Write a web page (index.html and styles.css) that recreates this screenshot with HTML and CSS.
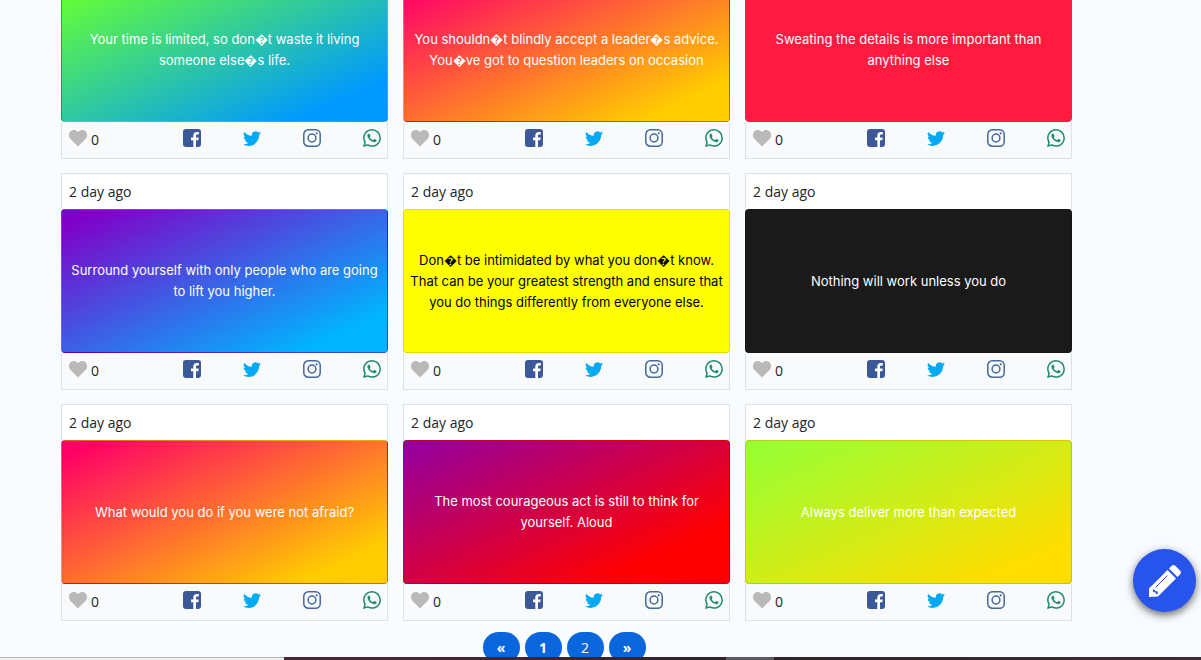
FILE: index.html
```
<!DOCTYPE html>
<html lang="en">
<head>
    <meta charset="UTF-8">
    <meta name="viewport" content="width=device-width, initial-scale=1.0">
    <title>Quotes</title>
    <link rel="stylesheet" href="styles.css">
</head>
<body>
    <svg class="sprite" aria-hidden="true">
        <symbol id="heart" viewBox="0 0 18 17">
            <path d="M9 17 1.500 9.500C-.5 7.500-.5 4 1.300 2 3.200 0 6.400 0 8.300 2L9 2.800 9.700 2c1.900-2 5.100-2 7 0 1.800 2 1.800 5.500-.2 7.500z"/>
        </symbol>
        <symbol id="facebook" viewBox="0 0 18 18">
            <rect width="18" height="18" rx="3"/>
            <path fill="#fff" d="M10.300 18v-6.700H8V8.600h2.300V6.500c0-2.300 1.400-3.600 3.500-3.600.8 0 1.500.1 2 .2v2.300h-1.400c-1.100 0-1.400.6-1.400 1.400v1.800h2.700l-.4 2.700H13V18z"/>
        </symbol>
        <symbol id="twitter" viewBox="0 0 16 16">
            <path d="M5.026 15c6.038 0 9.341-5.003 9.341-9.334 0-.14 0-.282-.006-.422A6.685 6.685 0 0 0 16 3.542a6.658 6.658 0 0 1-1.889.518 3.301 3.301 0 0 0 1.447-1.817 6.533 6.533 0 0 1-2.087.793A3.286 3.286 0 0 0 7.875 6.030a9.325 9.325 0 0 1-6.767-3.429 3.289 3.289 0 0 0 1.018 4.382A3.323 3.323 0 0 1 .64 6.575v.045a3.288 3.288 0 0 0 2.632 3.218 3.203 3.203 0 0 1-.865.115 3.230 3.230 0 0 1-.614-.057 3.283 3.283 0 0 0 3.067 2.277A6.588 6.588 0 0 1 .78 13.580a6.320 6.320 0 0 1-.78-.045A9.344 9.344 0 0 0 5.026 15z"/>
        </symbol>
        <symbol id="instagram" viewBox="0 0 18 18">
            <rect x="0.800" y="0.800" width="16.400" height="16.400" rx="4.500" fill="none" stroke="currentColor" stroke-width="1.500"/>
            <circle cx="9" cy="9" r="3.900" fill="none" stroke="currentColor" stroke-width="1.500"/>
            <circle cx="13.700" cy="4.300" r="1.100"/>
        </symbol>
        <symbol id="whatsapp" viewBox="0 0 16 16">
            <path d="M13.601 2.326A7.854 7.854 0 0 0 7.994 0C3.627 0 .068 3.558.064 7.926c0 1.399.366 2.760 1.057 3.965L0 16l4.204-1.102a7.933 7.933 0 0 0 3.790.965h.004c4.368 0 7.926-3.558 7.930-7.930A7.898 7.898 0 0 0 13.600 2.326zM7.994 14.521a6.573 6.573 0 0 1-3.356-.920l-.240-.144-2.494.654.666-2.433-.156-.251a6.560 6.560 0 0 1-1.007-3.505c0-3.626 2.957-6.584 6.591-6.584a6.560 6.560 0 0 1 4.660 1.931 6.557 6.557 0 0 1 1.928 4.660c-.004 3.639-2.961 6.592-6.592 6.592zm3.615-4.934c-.197-.099-1.170-.578-1.353-.646-.182-.065-.315-.099-.445.099-.133.197-.513.646-.627.775-.114.133-.232.148-.430.050-.197-.100-.836-.308-1.592-.985-.590-.525-.985-1.175-1.103-1.372-.114-.198-.011-.304.088-.403.087-.088.197-.232.296-.346.100-.114.133-.198.198-.330.065-.134.034-.248-.015-.347-.050-.099-.445-1.076-.612-1.470-.160-.389-.323-.335-.445-.340-.114-.007-.247-.007-.380-.007a.729.729 0 0 0-.529.247c-.182.198-.691.677-.691 1.654 0 .977.710 1.916.810 2.049.098.133 1.394 2.132 3.383 2.992.470.205.840.326 1.129.418.475.152.904.129 1.246.080.380-.058 1.171-.480 1.338-.943.164-.464.164-.860.114-1.057-.049-.084-.182-.133-.380-.232z"/>
        </symbol>
    </svg>

    <main class="container">
        <div class="quotes">
            <article class="quote">
                <div class="quote-text green-blue"><p>Your time is limited, so don&#xFFFD;t waste it living<br>someone else&#xFFFD;s life.</p></div>
                <div class="quote-footer">
                    <button class="like" type="button" aria-label="Like"><svg><use href="#heart"/></svg></button><span class="count">0</span>
                    <div class="share">
                        <a class="facebook" href="#" aria-label="Facebook"><svg><use href="#facebook"/></svg></a>
                        <a class="twitter" href="#" aria-label="Twitter"><svg><use href="#twitter"/></svg></a>
                        <a class="instagram" href="#" aria-label="Instagram"><svg><use href="#instagram"/></svg></a>
                        <a class="whatsapp" href="#" aria-label="WhatsApp"><svg><use href="#whatsapp"/></svg></a>
                    </div>
                </div>
            </article>
            <article class="quote">
                <div class="quote-text pink-orange"><p>You shouldn&#xFFFD;t blindly accept a leader&#xFFFD;s advice.<br>You&#xFFFD;ve got to question leaders on occasion</p></div>
                <div class="quote-footer">
                    <button class="like" type="button" aria-label="Like"><svg><use href="#heart"/></svg></button><span class="count">0</span>
                    <div class="share">
                        <a class="facebook" href="#" aria-label="Facebook"><svg><use href="#facebook"/></svg></a>
                        <a class="twitter" href="#" aria-label="Twitter"><svg><use href="#twitter"/></svg></a>
                        <a class="instagram" href="#" aria-label="Instagram"><svg><use href="#instagram"/></svg></a>
                        <a class="whatsapp" href="#" aria-label="WhatsApp"><svg><use href="#whatsapp"/></svg></a>
                    </div>
                </div>
            </article>
            <article class="quote">
                <div class="quote-text red"><p>Sweating the details is more important than<br>anything else</p></div>
                <div class="quote-footer">
                    <button class="like" type="button" aria-label="Like"><svg><use href="#heart"/></svg></button><span class="count">0</span>
                    <div class="share">
                        <a class="facebook" href="#" aria-label="Facebook"><svg><use href="#facebook"/></svg></a>
                        <a class="twitter" href="#" aria-label="Twitter"><svg><use href="#twitter"/></svg></a>
                        <a class="instagram" href="#" aria-label="Instagram"><svg><use href="#instagram"/></svg></a>
                        <a class="whatsapp" href="#" aria-label="WhatsApp"><svg><use href="#whatsapp"/></svg></a>
                    </div>
                </div>
            </article>
            <article class="quote">
                <div class="quote-date">2 day ago</div>
                <div class="quote-text purple-blue"><p>Surround yourself with only people who are going<br>to lift you higher.</p></div>
                <div class="quote-footer">
                    <button class="like" type="button" aria-label="Like"><svg><use href="#heart"/></svg></button><span class="count">0</span>
                    <div class="share">
                        <a class="facebook" href="#" aria-label="Facebook"><svg><use href="#facebook"/></svg></a>
                        <a class="twitter" href="#" aria-label="Twitter"><svg><use href="#twitter"/></svg></a>
                        <a class="instagram" href="#" aria-label="Instagram"><svg><use href="#instagram"/></svg></a>
                        <a class="whatsapp" href="#" aria-label="WhatsApp"><svg><use href="#whatsapp"/></svg></a>
                    </div>
                </div>
            </article>
            <article class="quote">
                <div class="quote-date">2 day ago</div>
                <div class="quote-text yellow"><p>Don&#xFFFD;t be intimidated by what you don&#xFFFD;t know.<br>That can be your greatest strength and ensure that<br>you do things differently from everyone else.</p></div>
                <div class="quote-footer">
                    <button class="like" type="button" aria-label="Like"><svg><use href="#heart"/></svg></button><span class="count">0</span>
                    <div class="share">
                        <a class="facebook" href="#" aria-label="Facebook"><svg><use href="#facebook"/></svg></a>
                        <a class="twitter" href="#" aria-label="Twitter"><svg><use href="#twitter"/></svg></a>
                        <a class="instagram" href="#" aria-label="Instagram"><svg><use href="#instagram"/></svg></a>
                        <a class="whatsapp" href="#" aria-label="WhatsApp"><svg><use href="#whatsapp"/></svg></a>
                    </div>
                </div>
            </article>
            <article class="quote">
                <div class="quote-date">2 day ago</div>
                <div class="quote-text black"><p>Nothing will work unless you do</p></div>
                <div class="quote-footer">
                    <button class="like" type="button" aria-label="Like"><svg><use href="#heart"/></svg></button><span class="count">0</span>
                    <div class="share">
                        <a class="facebook" href="#" aria-label="Facebook"><svg><use href="#facebook"/></svg></a>
                        <a class="twitter" href="#" aria-label="Twitter"><svg><use href="#twitter"/></svg></a>
                        <a class="instagram" href="#" aria-label="Instagram"><svg><use href="#instagram"/></svg></a>
                        <a class="whatsapp" href="#" aria-label="WhatsApp"><svg><use href="#whatsapp"/></svg></a>
                    </div>
                </div>
            </article>
            <article class="quote">
                <div class="quote-date">2 day ago</div>
                <div class="quote-text pink-orange"><p>What would you do if you were not afraid?</p></div>
                <div class="quote-footer">
                    <button class="like" type="button" aria-label="Like"><svg><use href="#heart"/></svg></button><span class="count">0</span>
                    <div class="share">
                        <a class="facebook" href="#" aria-label="Facebook"><svg><use href="#facebook"/></svg></a>
                        <a class="twitter" href="#" aria-label="Twitter"><svg><use href="#twitter"/></svg></a>
                        <a class="instagram" href="#" aria-label="Instagram"><svg><use href="#instagram"/></svg></a>
                        <a class="whatsapp" href="#" aria-label="WhatsApp"><svg><use href="#whatsapp"/></svg></a>
                    </div>
                </div>
            </article>
            <article class="quote">
                <div class="quote-date">2 day ago</div>
                <div class="quote-text purple-red"><p>The most courageous act is still to think for<br>yourself. Aloud</p></div>
                <div class="quote-footer">
                    <button class="like" type="button" aria-label="Like"><svg><use href="#heart"/></svg></button><span class="count">0</span>
                    <div class="share">
                        <a class="facebook" href="#" aria-label="Facebook"><svg><use href="#facebook"/></svg></a>
                        <a class="twitter" href="#" aria-label="Twitter"><svg><use href="#twitter"/></svg></a>
                        <a class="instagram" href="#" aria-label="Instagram"><svg><use href="#instagram"/></svg></a>
                        <a class="whatsapp" href="#" aria-label="WhatsApp"><svg><use href="#whatsapp"/></svg></a>
                    </div>
                </div>
            </article>
            <article class="quote">
                <div class="quote-date">2 day ago</div>
                <div class="quote-text green-yellow"><p>Always deliver more than expected</p></div>
                <div class="quote-footer">
                    <button class="like" type="button" aria-label="Like"><svg><use href="#heart"/></svg></button><span class="count">0</span>
                    <div class="share">
                        <a class="facebook" href="#" aria-label="Facebook"><svg><use href="#facebook"/></svg></a>
                        <a class="twitter" href="#" aria-label="Twitter"><svg><use href="#twitter"/></svg></a>
                        <a class="instagram" href="#" aria-label="Instagram"><svg><use href="#instagram"/></svg></a>
                        <a class="whatsapp" href="#" aria-label="WhatsApp"><svg><use href="#whatsapp"/></svg></a>
                    </div>
                </div>
            </article>
        </div>

        <nav class="pagination" aria-label="Pages">
            <a class="arrow" href="#">&laquo;</a>
            <a class="active" href="#">1</a>
            <a href="#">2</a>
            <a class="arrow" href="#">&raquo;</a>
        </nav>
    </main>

    <button class="write" type="button" aria-label="Write a quote">
        <svg viewBox="0 0 32 32">
            <path fill="#fff" d="M0 32V23.500L18.500 5 27 13.500 9 31.500zM20 3.500 22.500 1c1.300-1.300 2.700-1.300 4 0l4.500 4.500c1.200 1.200 1.200 2.700 0 4L28.500 12z"/>
            <path fill="none" stroke="#2754eb" d="M6.500 22.500 18.500 10.500"/>
            <path fill="#2754eb" d="M3.500 25.500 5 24l1 2 2.500.5.500 2-1.500 1-1-2-2-.5z"/>
        </svg>
    </button>

    <div class="taskbar">
        <span class="taskbar-status"></span>
        <span class="taskbar-window"></span>
    </div>
</body>
</html>
```
FILE: styles.css
```
* {
    box-sizing: border-box;
}

body {
    margin: 0;
    height: 100vh;
    overflow: hidden;
    background-color: #f8fbff;
    color: #212529;
    font-family: "Segoe UI", "Open Sans", sans-serif;
    font-size: 14px;
    line-height: 21px;
}

.sprite {
    display: none;
}

/* the first row runs off the top of the window */
.container {
    margin-top: -22px;
    padding: 0 129px 0 61px;
}

.quotes {
    display: grid;
    grid-template-columns: repeat(3, minmax(0, 1fr));
    gap: 14px 15px;
}

.quote-date {
    padding: 7px;
    background-color: #fff;
    border: 1px solid #dee2e6;
    border-bottom: none;
}

.quote-text {
    display: flex;
    align-items: center;
    justify-content: center;
    min-height: 144px;
    border: 1px solid rgba(0, 0, 0, 0.125);
    border-radius: 4px;
    color: #fff;
    font-family: "Segoe UI", Inter, sans-serif;
    font-size: 13px;
    text-align: center;
    white-space: nowrap;
}

.quote-text p {
    margin: 0;
}

.green-blue {
    background-image: linear-gradient(155deg, #66ff33 5%, #0099ff 86%);
}

.pink-orange {
    background-image: linear-gradient(155deg, #ff0066 5%, #ffcc00 86%);
}

.purple-blue {
    background-image: linear-gradient(155deg, #8000c8 5%, #00b4ff 86%);
}

.purple-red {
    background-image: linear-gradient(155deg, #990099 5%, #ff0000 80%);
}

.green-yellow {
    background-image: linear-gradient(155deg, #99ff33 5%, #ffdd00 86%);
}

.red {
    background-color: #ff1a40;
    border-color: #ff1a40;
}

.yellow {
    background-color: #ffff00;
    color: #000;
}

.black {
    background-color: #1a1a1a;
}

.quote-footer {
    display: flex;
    align-items: flex-start;
    padding: 7px 6px 7px 7px;
    background-color: #f8fafc;
    border: 1px solid #dee2e6;
    border-top: none;
}

.quote-footer svg {
    display: block;
    width: 18px;
    height: 18px;
    fill: currentColor;
}

.like {
    padding: 0;
    border: none;
    background: none;
    color: #b9b9b9;
    cursor: pointer;
}

.count {
    margin-left: 4px;
    line-height: 22px;
}

.share {
    display: flex;
    gap: 42px;
    margin-left: auto;
}

.facebook {
    color: #3b5998;
}

.twitter {
    color: #03a9f4;
}

.instagram {
    color: #46699b;
}

.whatsapp {
    color: #1e8a6e;
}

.pagination {
    display: flex;
    justify-content: center;
    margin-top: 11px;
}

.pagination a {
    width: 37px;
    margin-right: 5px;
    padding: 5px 0;
    border-radius: 16px;
    background-color: #0a66dc;
    color: #fff;
    text-align: center;
    text-decoration: none;
}

.pagination .active,
.pagination .arrow {
    font-weight: bold;
}

.write {
    position: fixed;
    right: 5px;
    bottom: 48px;
    display: flex;
    align-items: center;
    justify-content: center;
    width: 63px;
    height: 63px;
    padding: 0;
    border: none;
    border-radius: 50%;
    background-color: #2754eb;
    box-shadow: 0 3px 8px rgba(0, 0, 0, 0.6);
    cursor: pointer;
}

.write svg {
    width: 32px;
    height: 32px;
}

.taskbar {
    position: fixed;
    right: 0;
    bottom: 0;
    left: 0;
    display: flex;
    height: 3px;
    background: linear-gradient(90deg, #3a2a2e, #4a2738 30%, #2e2429 60%, #402a33);
}

.taskbar-status {
    width: 284px;
    background-color: #f1f1f1;
    border-top: 1px solid #b5b5b5;
}

.taskbar-window {
    width: 48px;
    margin-left: 442px;
    background-color: #5d5960;
}
```
